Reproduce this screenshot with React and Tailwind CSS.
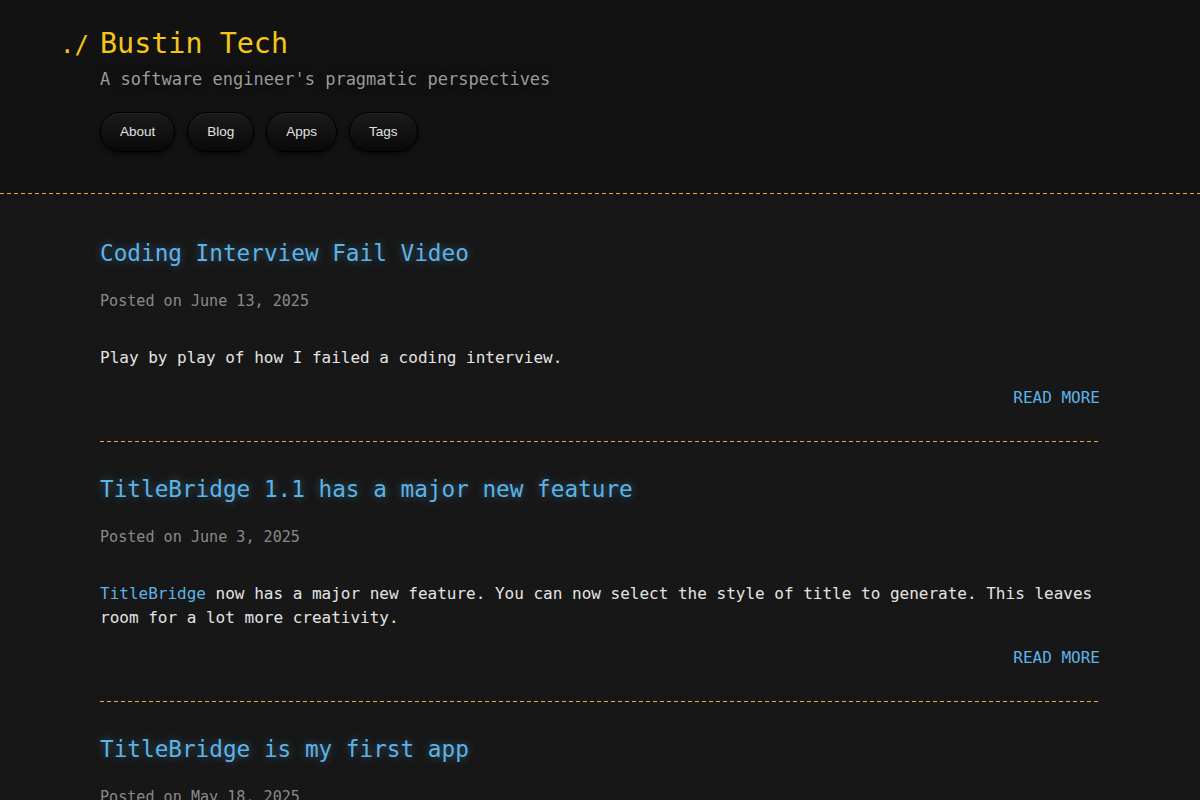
import React from 'react';

const navItems = ['About', 'Blog', 'Apps', 'Tags'];

const posts = [
    {
        title: 'Coding Interview Fail Video',
        date: 'June 13, 2025',
        body: <>Play by play of how I failed a coding interview.</>,
    },
    {
        title: 'TitleBridge 1.1 has a major new feature',
        date: 'June 3, 2025',
        body: (
            <>
                <a href="#" className="text-[#5cb3e6]">TitleBridge</a> now has a major new feature. You can now select the style of title to generate. This leaves room for a lot more creativity.
            </>
        ),
    },
    {
        title: 'TitleBridge is my first app',
        date: 'May 18, 2025',
        body: <>I built TitleBridge to help creators come up with better titles.</>,
    },
];

const mono = { fontFamily: '"DejaVu Sans Mono", "Liberation Mono", monospace' };

// yellow dashed rule used under the header and between posts
const Dashed = () => (
    <div className="h-px w-full bg-[repeating-linear-gradient(90deg,#e3b13a_0_4px,transparent_4px_7px)]" />
);

// site header with the ./ prompt prefix
const Header = () => (
    <header className="w-full bg-[#121212]">
        <div className="pt-[27px] pb-[41px] pl-[100px]">
            <div className="flex items-baseline -ml-[40px]">
                <span className="w-[40px] text-[24px] leading-none text-[#f5c518]">./</span>
                <h1 className="text-[28.4px] leading-[34px] text-[#f5c518] font-normal">Bustin Tech</h1>
            </div>
            <p className="mt-[6px] text-[17px] leading-[25px] text-[#9b9b9b] [text-shadow:0_0_10px_rgba(0,0,0,0.6)]">
                A software engineer's pragmatic perspectives
            </p>
            <nav className="mt-5 flex gap-3" style={{ fontFamily: '"Liberation Sans", Arial, sans-serif' }}>
                {navItems.map((item) => (
                    <a
                        key={item}
                        href="#"
                        className="h-10 px-[19px] flex items-center rounded-full border border-black bg-gradient-to-b from-[#1b1b1b] to-[#090909] text-[13.5px] text-[#e2e2e2] shadow-[0_2px_4px_rgba(0,0,0,0.6),inset_0_1px_0_rgba(255,255,255,0.04)]"
                    >
                        {item}
                    </a>
                ))}
            </nav>
        </div>
        <Dashed />
    </header>
);

const Post = ({ post }) => (
    <article className="pt-[33.5px]">
        <h2 className="text-[22.7px] leading-[27px] text-[#5cb3e6] font-normal [text-shadow:0_0_8px_rgba(92,179,230,0.45)]">
            <a href="#">{post.title}</a>
        </h2>
        <p className="mt-[23px] text-[15.1px] leading-[22.6px] text-[#8a8a8a]">Posted on {post.date}</p>
        <p className="mt-[34px] text-[16px] leading-6 text-[#e4e4e4]">{post.body}</p>
        <div className="mt-4 mb-[31px] flex justify-end">
            <a href="#" className="text-[16px] leading-6 text-[#5cb3e6] uppercase">Read More</a>
        </div>
        <Dashed />
    </article>
);

export default function App() {
    return (
        <div className="min-h-screen bg-[#171717]" style={mono}>
            <Header />
            <main className="w-[1000px] mx-auto pt-[12px]">
                {posts.map((post) => (
                    <Post key={post.title} post={post} />
                ))}
            </main>
        </div>
    );
}
